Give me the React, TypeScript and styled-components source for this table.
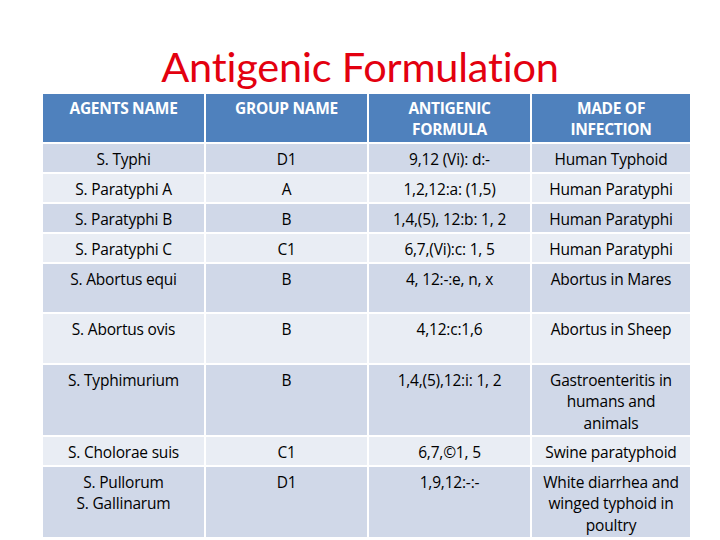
import React, { FC } from 'react';
import styled, { createGlobalStyle } from 'styled-components';

interface IRow {
  agent: string[];
  group: string;
  formula: string;
  infection: string[];
  height: number;
}

const rows: IRow[] = [
  { agent: ['S. Typhi'], group: 'D1', formula: '9,12 (Vi): d:-', infection: ['Human Typhoid'], height: 28 },
  { agent: ['S. Paratyphi A'], group: 'A', formula: '1,2,12:a: (1,5)', infection: ['Human Paratyphi'], height: 28 },
  { agent: ['S. Paratyphi B'], group: 'B', formula: '1,4,(5), 12:b: 1, 2', infection: ['Human Paratyphi'], height: 28 },
  { agent: ['S. Paratyphi C'], group: 'C1', formula: '6,7,(Vi):c: 1, 5', infection: ['Human Paratyphi'], height: 28 },
  { agent: ['S. Abortus equi'], group: 'B', formula: '4, 12:-:e, n, x', infection: ['Abortus in Mares'], height: 48 },
  { agent: ['S. Abortus ovis'], group: 'B', formula: '4,12:c:1,6', infection: ['Abortus in Sheep'], height: 49 },
  {
    agent: ['S. Typhimurium'],
    group: 'B',
    formula: '1,4,(5),12:i: 1, 2',
    infection: ['Gastroenteritis in', 'humans and', 'animals'],
    height: 70,
  },
  { agent: ['S. Cholorae suis'], group: 'C1', formula: '6,7,©1, 5', infection: ['Swine paratyphoid'], height: 28 },
  {
    agent: ['S. Pullorum', 'S. Gallinarum'],
    group: 'D1',
    formula: '1,9,12:-:-',
    infection: ['White diarrhea and', 'winged typhoid in', 'poultry'],
    height: 70,
  },
];

const GlobalStyle = createGlobalStyle`
  html, body {
    margin: 0;
    padding: 0;
    background: #ffffff;
  }
  body {
    font-family: 'Open Sans', Lato, sans-serif;
  }
`;

const Slide = styled.div`
  width: 720px;
  height: 540px;
  display: flex;
  flex-direction: column;
  align-items: flex-start;
  overflow: hidden;
`;

const Title = styled.h1`
  margin: 0;
  width: 720px;
  height: 94px;
  padding-top: 42px;
  box-sizing: border-box;
  text-align: center;
  font-family: Lato, 'Open Sans', sans-serif;
  font-weight: 400;
  font-size: 41.5px;
  line-height: 48px;
  color: #e3000f;
  letter-spacing: -0.2px;
`;

const Table = styled.div`
  margin-left: 43px;
  display: grid;
  grid-template-columns: 161px 161px 161px 158px;
  gap: 2px;
  background: #ffffff;
`;

const HeadCell = styled.div`
  background: #4f81bd;
  color: #ffffff;
  font-weight: 700;
  font-size: 15.5px;
  line-height: 21px;
  text-align: center;
  padding-top: 4px;
  height: 48px;
  box-sizing: border-box;
  letter-spacing: -0.3px;
`;

const Cell = styled.div<{ $shade: boolean; $h: number }>`
  background: ${(p) => (p.$shade ? '#d0d8e8' : '#e9edf4')};
  color: #000000;
  font-size: 15.5px;
  line-height: 21.5px;
  text-align: center;
  padding-top: 4.5px;
  height: ${(p) => p.$h}px;
  box-sizing: border-box;
  letter-spacing: -0.2px;
`;

const Line = styled.div``;

const App: FC = () => (
  <>
    <GlobalStyle />
    <Slide>
      <Title>Antigenic Formulation</Title>
      <Table>
        <HeadCell>AGENTS NAME</HeadCell>
        <HeadCell>GROUP NAME</HeadCell>
        <HeadCell>
          ANTIGENIC
          <br />
          FORMULA
        </HeadCell>
        <HeadCell>
          MADE OF
          <br />
          INFECTION
        </HeadCell>
        {rows.map((row, index) => {
          const shade = index % 2 === 0;
          return (
            <React.Fragment key={index}>
              <Cell $shade={shade} $h={row.height}>
                {row.agent.map((l) => (
                  <Line key={l}>{l}</Line>
                ))}
              </Cell>
              <Cell $shade={shade} $h={row.height}>
                {row.group}
              </Cell>
              <Cell $shade={shade} $h={row.height}>
                {row.formula}
              </Cell>
              <Cell $shade={shade} $h={row.height}>
                {row.infection.map((l) => (
                  <Line key={l}>{l}</Line>
                ))}
              </Cell>
            </React.Fragment>
          );
        })}
      </Table>
    </Slide>
  </>
);

export default App;
